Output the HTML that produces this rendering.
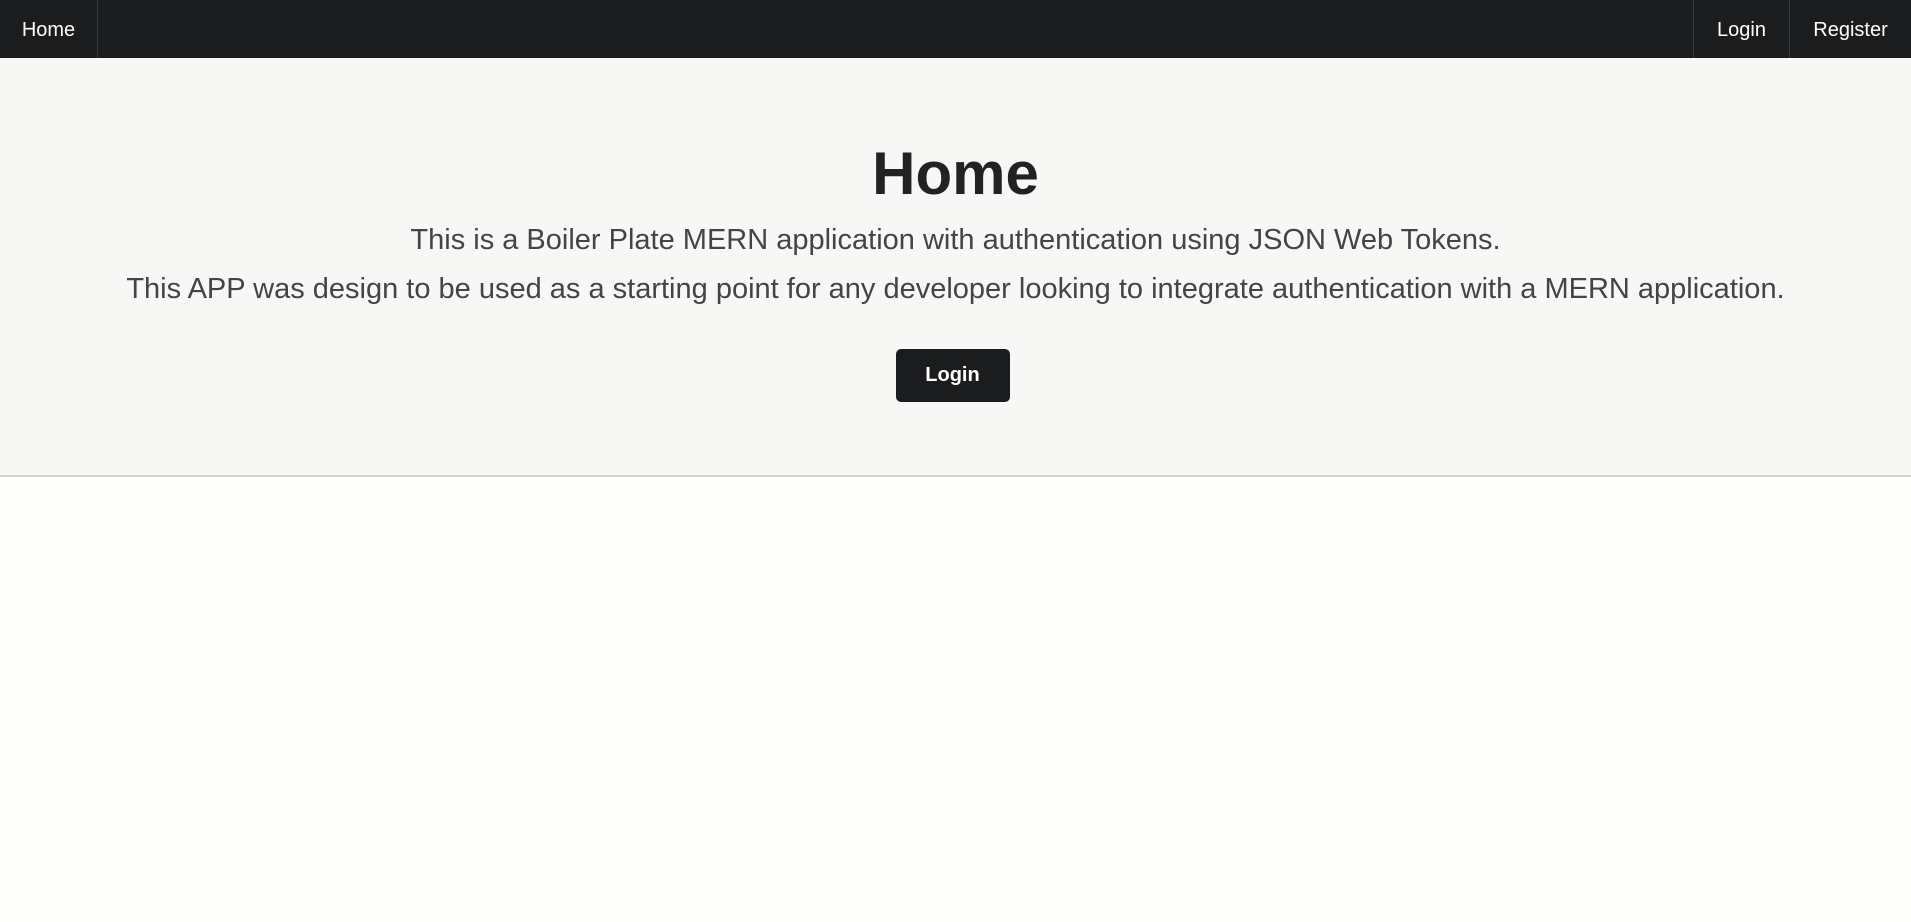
<!DOCTYPE html>
<html><head><meta charset="utf-8"><style>
html,body{margin:0;padding:0;}
body{width:1911px;height:922px;background:#fefefa;font-family:"Liberation Sans",sans-serif;overflow:hidden;}
nav{height:58px;background:#1b1c1d;position:relative;color:#fff;font-size:20px;}
nav a{position:absolute;top:0;height:58px;line-height:60px;color:#fff;text-decoration:none;text-align:center;box-sizing:border-box;}
.home{left:0;width:98px;border-right:1px solid #3a3b3c;}
.login{right:122px;width:96px;border-left:1px solid #3a3b3c;}
.reg{right:0;width:122px;border-left:1px solid #3a3b3c;}
.hero{height:419px;box-sizing:border-box;background:#f7f7f6;border-bottom:2px solid #d4d4d5;text-align:center;}
h1{margin:0 0 6px;padding-top:80px;font-size:60px;line-height:72px;color:#222;font-weight:bold;}
p{margin:0;font-size:29px;color:#444;line-height:49px;}
.btn{display:inline-block;margin-top:35px;margin-right:6px;width:114px;height:53px;line-height:53px;background:#1b1c1d;color:#fff;font-weight:bold;font-size:20px;border-radius:5px;}
</style></head><body>
<nav><a class="home">Home</a><a class="login">Login</a><a class="reg">Register</a></nav>
<div class="hero">
<h1>Home</h1>
<p>This is a Boiler Plate MERN application with authentication using JSON Web Tokens.</p>
<p>This APP was design to be used as a starting point for any developer looking to integrate authentication with a MERN application.</p>
<div class="btn">Login</div>
</div>
</body></html>
